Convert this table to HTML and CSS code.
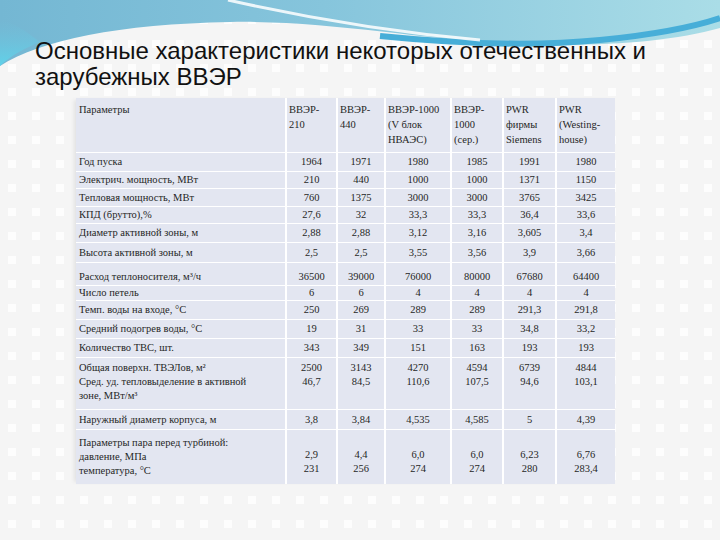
FILE: index.html
```html
<!DOCTYPE html>
<html lang="ru">
<head>
<meta charset="utf-8">
<title>ВВЭР</title>
<link rel="stylesheet" href="styles.css">
</head>
<body>
<div class="slide">
  <svg class="wave" width="720" height="80" viewBox="0 0 720 80" aria-hidden="true">
    <defs>
      <linearGradient id="g1" x1="0" y1="0" x2="1" y2="0">
        <stop offset="0" stop-color="#74b7d3"/>
        <stop offset="0.45" stop-color="#86c5dc"/>
        <stop offset="1" stop-color="#aadde7"/>
      </linearGradient>
      <linearGradient id="g2" x1="0" y1="0" x2="0" y2="1">
        <stop offset="0" stop-color="#6fc3dd" stop-opacity="0"/>
        <stop offset="1" stop-color="#5fd2ea"/>
      </linearGradient>
    </defs>
    <path d="M0,0 H720 V28 C670,42 600,47 520,44 C420,40 330,20 230,22 C120,24 40,40 0,66 Z" fill="url(#g1)"/>
    <path d="M0,20 C20,25 30,35 40,42 C25,48 10,56 0,66 Z" fill="url(#g2)"/>
    <path d="M380,36 C460,44 540,46 600,40 C650,35 690,28 720,18" fill="none" stroke="#47aed8" stroke-width="6"/>
    <path d="M228,0 C290,14 370,30 480,40" fill="none" stroke="#ffffff" stroke-opacity="0.85" stroke-width="3"/>
  </svg>

  <h1 class="title">Основные характеристики некоторых отечественных и<br>зарубежных ВВЭР</h1>

  <table class="data">
    <colgroup>
      <col class="c1"><col class="c2"><col class="c3"><col class="c4"><col class="c5"><col class="c6"><col class="c7">
    </colgroup>
    <tr class="head">
      <th>Параметры</th>
      <th>ВВЭР-<br>210</th>
      <th>ВВЭР-<br>440</th>
      <th>ВВЭР-1000<br>(V блок<br>НВАЭС)</th>
      <th>ВВЭР-<br>1000<br>(сер.)</th>
      <th>PWR<br>фирмы<br>Siemens</th>
      <th>PWR<br>(Westing-<br>house)</th>
    </tr>
    <tr class="r19"><td>Год пуска</td><td>1964</td><td>1971</td><td>1980</td><td>1985</td><td>1991</td><td>1980</td></tr>
    <tr class="r17"><td>Электрич. мощность, МВт</td><td>210</td><td>440</td><td>1000</td><td>1000</td><td>1371</td><td>1150</td></tr>
    <tr class="r18"><td>Тепловая мощность, МВт</td><td>760</td><td>1375</td><td>3000</td><td>3000</td><td>3765</td><td>3425</td></tr>
    <tr class="r17"><td>КПД (брутто),%</td><td>27,6</td><td>32</td><td>33,3</td><td>33,3</td><td>36,4</td><td>33,6</td></tr>
    <tr class="r19"><td>Диаметр активной зоны, м</td><td>2,88</td><td>2,88</td><td>3,12</td><td>3,16</td><td>3,605</td><td>3,4</td></tr>
    <tr class="r20"><td>Высота активной зоны, м</td><td>2,5</td><td>2,5</td><td>3,55</td><td>3,56</td><td>3,9</td><td>3,66</td></tr>
    <tr class="r23"><td>Расход теплоносителя, м³/ч</td><td>36500</td><td>39000</td><td>76000</td><td>80000</td><td>67680</td><td>64400</td></tr>
    <tr class="r15"><td>Число петель</td><td>6</td><td>6</td><td>4</td><td>4</td><td>4</td><td>4</td></tr>
    <tr class="r19"><td>Темп. воды на входе, °С</td><td>250</td><td>269</td><td>289</td><td>289</td><td>291,3</td><td>291,8</td></tr>
    <tr class="r19"><td>Средний подогрев воды, °С</td><td>19</td><td>31</td><td>33</td><td>33</td><td>34,8</td><td>33,2</td></tr>
    <tr class="r19"><td>Количество ТВС, шт.</td><td>343</td><td>349</td><td>151</td><td>163</td><td>193</td><td>193</td></tr>
    <tr class="r51 multi"><td>Общая поверхн. ТВЭЛов, м²<br>Сред. уд. тепловыделение в активной<br>зоне, МВт/м³</td><td>2500<br>46,7</td><td>3143<br>84,5</td><td>4270<br>110,6</td><td>4594<br>107,5</td><td>6739<br>94,6</td><td>4844<br>103,1</td></tr>
    <tr class="r20"><td>Наружный диаметр корпуса, м</td><td>3,8</td><td>3,84</td><td>4,535</td><td>4,585</td><td>5</td><td>4,39</td></tr>
    <tr class="steam multi"><td>Параметры пара перед турбиной:<br>давление, МПа<br>температура, °С</td><td>2,9<br>231</td><td>4,4<br>256</td><td>6,0<br>274</td><td>6,0<br>274</td><td>6,23<br>280</td><td>6,76<br>283,4</td></tr>
  </table>
</div>
</body>
</html>
```

FILE: styles.css
```css
html, body {
  margin: 0;
  padding: 0;
}

.slide {
  position: relative;
  width: 720px;
  height: 540px;
  overflow: hidden;
  background-color: #fdfdfd;
  background-image:
    linear-gradient(90deg, transparent 8px, #f5f5f5 8px),
    linear-gradient(transparent 8px, #f5f5f5 8px);
  background-size: 24px 24px;
  background-position: 8px 16px;
}

.wave {
  position: absolute;
  top: 0;
  left: 0;
  display: block;
}

.title {
  position: relative;
  margin: 0;
  padding: 38px 0 0 35px;
  font-family: "Liberation Sans", Arial, sans-serif;
  font-weight: normal;
  font-size: 24px;
  line-height: 26px;
  color: #111;
}

.data {
  position: relative;
  margin: 8px 0 0 76px;
  border-collapse: collapse;
  table-layout: fixed;
  width: 539px;
  font-family: "Liberation Serif", "Times New Roman", serif;
  font-size: 10.5px;
  color: #262626;
  box-shadow: -4px 0 4px -2px rgba(0, 0, 0, 0.08);
}

.c1 { width: 210px; }
.c2 { width: 51px; }
.c3 { width: 48px; }
.c4 { width: 66px; }
.c5 { width: 52px; }
.c6 { width: 53px; }
.c7 { width: 59px; }

.data th,
.data td {
  background: #e3e6f1;
  border: 1px solid #ffffff;
  border-left-width: 2px;
  border-right-width: 2px;
  padding: 0 2px;
  text-align: center;
  vertical-align: middle;
  line-height: 14px;
  white-space: nowrap;
}

.data th:first-child,
.data td:first-child {
  text-align: left;
  padding-left: 3px;
  border-left: none;
}

.data th:last-child,
.data td:last-child {
  border-right: none;
}

.data tr:first-child th {
  border-top: none;
}

.data tr:last-child td {
  border-bottom: none;
}

.head th {
  height: 50px;
  font-weight: normal;
  text-align: left;
  vertical-align: top;
  padding-top: 4px;
  line-height: 15px;
}

.r15 td { height: 14px; }
.r17 td { height: 16px; }
.r18 td { height: 17px; }
.r19 td { height: 18px; }
.r20 td { height: 19px; }
.r23 td { height: 21px; vertical-align: bottom; padding-bottom: 1px; }

.r51 td {
  height: 48px;
  vertical-align: top;
  padding-top: 3px;
}

.steam td {
  height: 36px;
  vertical-align: top;
  padding-top: 6px;
}

.steam td + td {
  padding-top: 18px;
}
```
